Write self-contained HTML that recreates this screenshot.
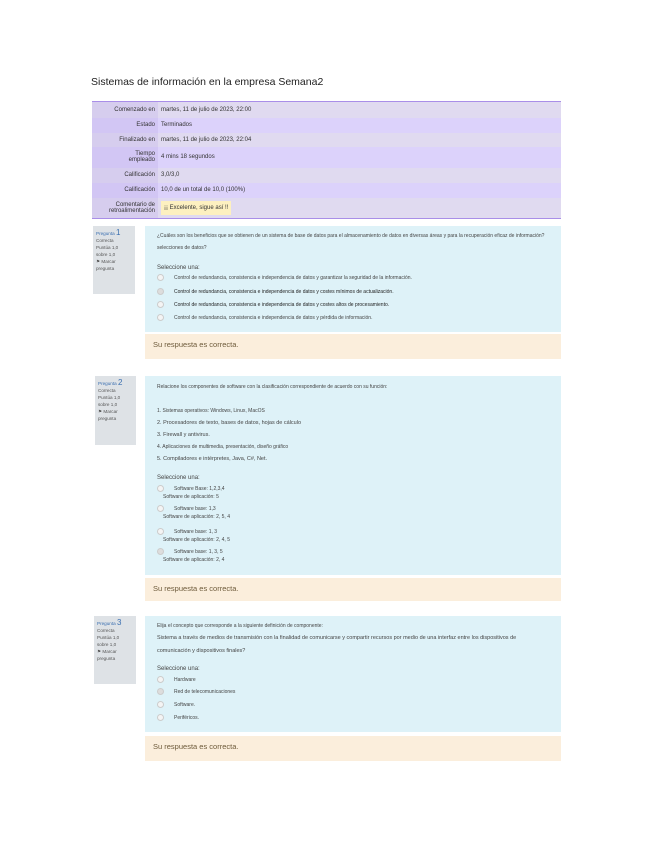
<!DOCTYPE html>
<html><head><meta charset="utf-8"><style>
body{margin:0;background:#fff;font-family:"Liberation Sans",sans-serif;width:655px;height:848px;position:relative;overflow:hidden;color:#333}
.abs{position:absolute}
h1{position:absolute;left:91px;top:76px;margin:0;font-size:10.5px;font-weight:normal;color:#222}
table{position:absolute;left:92px;top:101px;width:469px;border-collapse:collapse;font-size:6px;border-top:1px solid #a98ee8;border-bottom:1px solid #a98ee8}
td{padding:0 3px;vertical-align:middle}
td.l{width:60px;text-align:right;color:#333;background:#d9cff5}
tr.a td{background:#e0daf0}tr.b td{background:#dcd2fb}
tr.a td.l{background:#d6cdee}tr.b td.l{background:#d2c6f4}
.info{position:absolute;background:#dee2e6;font-size:4.6px;color:#555;padding:3px 3px;line-height:7px;box-sizing:border-box}
.info b{font-weight:normal;color:#3a6fb0}
.info big{font-size:8px;color:#3a6fb0}
.q{position:absolute;left:145px;width:416px;background:#def2f8;font-size:5px;color:#444;box-sizing:border-box;padding:6px 8px;line-height:8px}
.fb{position:absolute;left:145px;width:416px;background:#fbeedc;font-size:7.5px;color:#6d5a3a;box-sizing:border-box;padding:6px 8px}
.r{display:inline-block;width:5px;height:5px;border-radius:50%;border:1px solid #ccc;background:#f4f4f4;margin-right:10px;vertical-align:middle}
.o{position:absolute;left:12px;font-size:5px}
</style></head><body>
<h1>Sistemas de información en la empresa Semana2</h1>
<table>
<tr class="a" style="height:16px"><td class="l">Comenzado en</td><td>martes, 11 de julio de 2023, 22:00</td></tr>
<tr class="b" style="height:15px"><td class="l">Estado</td><td>Terminados</td></tr>
<tr class="a" style="height:14px"><td class="l">Finalizado en</td><td>martes, 11 de julio de 2023, 22:04</td></tr>
<tr class="b" style="height:21px"><td class="l">Tiempo<br>empleado</td><td>4 mins 18 segundos</td></tr>
<tr class="a" style="height:15px"><td class="l">Calificación</td><td>3,0/3,0</td></tr>
<tr class="b" style="height:15px"><td class="l">Calificación</td><td>10,0 de un total de 10,0 (100%)</td></tr>
<tr class="a" style="height:21px"><td class="l">Comentario de<br>retroalimentación</td><td><span style="background:#fdf0c0;padding:4px 3px;display:inline-block">¡¡ Excelente, sigue así !!</span></td></tr>
</table>

<div class="info" style="left:93px;top:226px;width:42px;height:68px"><b>Pregunta</b> <big>1</big><br>Correcta<br>Puntúa 1,0<br>sobre 1,0<br>⚑ Marcar<br>pregunta</div>
<div class="q" style="top:226px;height:106px">
<div class="o" style="top:6px;right:10px">¿Cuáles son los beneficios que se obtienen de un sistema de base de datos para el almacenamiento de datos en diversas áreas y para la recuperación eficaz de información?</div>
<div class="o" style="top:18px">selecciones de datos?</div>
<div class="o" style="top:38px;font-size:6px">Seleccione una:</div>
<div class="o" style="top:48px"><span class="r"></span>Control de redundancia, consistencia e independencia de datos y garantizar la seguridad de la información.</div>
<div class="o" style="top:62px;color:#222"><span class="r" style="background:#ddd"></span>Control de redundancia, consistencia e independencia de datos y costes mínimos de actualización.</div>
<div class="o" style="top:75px;color:#222"><span class="r"></span>Control de redundancia, consistencia e independencia de datos y costes altos de procesamiento.</div>
<div class="o" style="top:88px"><span class="r"></span>Control de redundancia, consistencia e independencia de datos y pérdida de información.</div>
</div>
<div class="fb" style="top:334px;height:25px">Su respuesta es correcta.</div>

<div class="info" style="left:95px;top:376px;width:41px;height:69px"><b>Pregunta</b> <big>2</big><br>Correcta<br>Puntúa 1,0<br>sobre 1,0<br>⚑ Marcar<br>pregunta</div>
<div class="q" style="top:376px;height:199px">
<div class="o" style="top:7px">Relacione los componentes de software con la clasificación correspondiente de acuerdo con su función:</div>
<div class="o" style="top:31px">1. Sistemas operativos: Windows, Linux, MacOS</div>
<div class="o" style="top:43px;font-size:5.5px">2. Procesadores de texto, bases de datos, hojas de cálculo</div>
<div class="o" style="top:55px;font-size:5.5px">3. Firewall y antivirus.</div>
<div class="o" style="top:67px">4. Aplicaciones de multimedia, presentación, diseño gráfico</div>
<div class="o" style="top:79px;font-size:5.5px">5. Compiladores e intérpretes, Java, C#, Net.</div>
<div class="o" style="top:98px;font-size:6px">Seleccione una:</div>
<div class="o" style="top:109px"><span class="r"></span>Software Base: 1,2,3,4<br><span style="margin-left:6px">Software de aplicación: 5</span></div>
<div class="o" style="top:129px"><span class="r"></span>Software base: 1,3<br><span style="margin-left:6px">Software de aplicación: 2, 5, 4</span></div>
<div class="o" style="top:152px"><span class="r"></span>Software base: 1, 3<br><span style="margin-left:6px">Software de aplicación: 2, 4, 5</span></div>
<div class="o" style="top:172px"><span class="r" style="background:#ddd"></span>Software base: 1, 3, 5<br><span style="margin-left:6px">Software de aplicación: 2, 4</span></div>
</div>
<div class="fb" style="top:578px;height:23px">Su respuesta es correcta.</div>

<div class="info" style="left:94px;top:616px;width:42px;height:68px"><b>Pregunta</b> <big>3</big><br>Correcta<br>Puntúa 1,0<br>sobre 1,0<br>⚑ Marcar<br>pregunta</div>
<div class="q" style="top:616px;height:116px">
<div class="o" style="top:6px">Elija el concepto que corresponde a la siguiente definición de componente:</div>
<div class="o" style="top:18px;font-size:5.5px">Sistema a través de medios de transmisión con la finalidad de comunicarse y compartir recursos por medio de una interfaz entre los dispositivos de</div>
<div class="o" style="top:31px;font-size:5.5px">comunicación y dispositivos finales?</div>
<div class="o" style="top:49px;font-size:6px">Seleccione una:</div>
<div class="o" style="top:60px"><span class="r"></span>Hardware</div>
<div class="o" style="top:72px"><span class="r" style="background:#ddd"></span>Red de telecomunicaciones</div>
<div class="o" style="top:85px"><span class="r"></span>Software.</div>
<div class="o" style="top:98px"><span class="r"></span>Periféricos.</div>
</div>
<div class="fb" style="top:736px;height:25px">Su respuesta es correcta.</div>
</body></html>
